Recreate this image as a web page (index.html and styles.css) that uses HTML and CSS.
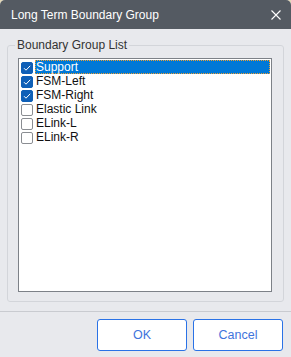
FILE: index.html
```html
<!DOCTYPE html>
<html>
<head>
<meta charset="utf-8">
<link rel="stylesheet" href="styles.css">
</head>
<body>
<div class="dialog">
  <div class="titlebar">
    <span class="title">Long Term Boundary Group</span>
    <svg class="close" width="10" height="10" viewBox="0 0 10 10"><path d="M0.5 0.5L9.5 9.5M9.5 0.5L0.5 9.5" stroke="#fff" stroke-width="1.1" fill="none"/></svg>
  </div>
  <div class="main">
    <fieldset class="group">
      <legend>Boundary Group List</legend>
      <div class="list">
        <div class="row"><span class="cb on"><svg width="12" height="12" viewBox="0 0 12 12"><path d="M3 6.2L5 8.2L9.2 3.8" stroke="#fff" stroke-width="1" fill="none"/></svg></span><span class="label sel">Support</span></div>
        <div class="row"><span class="cb on"><svg width="12" height="12" viewBox="0 0 12 12"><path d="M3 6.2L5 8.2L9.2 3.8" stroke="#fff" stroke-width="1" fill="none"/></svg></span><span class="label">FSM-Left</span></div>
        <div class="row"><span class="cb on"><svg width="12" height="12" viewBox="0 0 12 12"><path d="M3 6.2L5 8.2L9.2 3.8" stroke="#fff" stroke-width="1" fill="none"/></svg></span><span class="label">FSM-Right</span></div>
        <div class="row"><span class="cb"></span><span class="label">Elastic Link</span></div>
        <div class="row"><span class="cb"></span><span class="label">ELink-L</span></div>
        <div class="row"><span class="cb"></span><span class="label">ELink-R</span></div>
      </div>
    </fieldset>
  </div>
  <div class="footer">
    <button class="btn">OK</button>
    <button class="btn">Cancel</button>
  </div>
</div>
</body>
</html>
```
FILE: styles.css
```css
html, body {
  margin: 0;
  padding: 0;
  background: #e4d9b8;
}
.dialog {
  width: 291px;
  height: 357px;
  display: flex;
  flex-direction: column;
  background: #e8e9ed;
  font-family: "Liberation Sans", Arial, sans-serif;
  border-radius: 5px 5px 0 0;
  overflow: hidden;
}
.titlebar {
  height: 29px;
  flex: none;
  background: #545a62;
  color: #ffffff;
  display: flex;
  align-items: center;
  justify-content: space-between;
  padding: 0 10px 0 11px;
}
.title {
  font-size: 12px;
}
.close {
  display: block;
}
.main {
  flex: 1;
  display: flex;
  flex-direction: column;
  padding: 9px 7px 9px 7px;
  min-height: 0;
}
.group {
  flex: 1;
  margin: 0;
  border: 1px solid #d3d5da;
  border-radius: 3px;
  padding: 6px 11px 9px 10px;
  display: flex;
  flex-direction: column;
  min-height: 0;
}
.group legend {
  font-size: 12px;
  line-height: 14px;
  color: #333333;
  padding: 0 2px;
  margin-left: -3px;
}
.list {
  flex: 1;
  background: #ffffff;
  border: 1px solid #7d8188;
  padding: 1px 1px 0 2px;
}
.row {
  height: 14px;
  display: flex;
  align-items: center;
  font-size: 12px;
}
.cb {
  width: 12px;
  height: 12px;
  box-sizing: border-box;
  border: 1px solid #8a8d92;
  border-radius: 2px;
  background: #ffffff;
  flex: none;
  margin-top: 1px;
  margin-right: 2px;
  position: relative;
}
.cb.on {
  background: #0e5fb7;
  border-color: #0e5fb7;
}
.cb svg {
  position: absolute;
  left: -1px;
  top: -1px;
}
.label {
  height: 14px;
  line-height: 14px;
  padding-left: 1px;
  color: #111111;
  box-sizing: border-box;
}
.label.sel {
  flex: 1;
  background: #0078d7;
  color: #ffffff;
  outline: 1px dotted #f0a030;
  outline-offset: -1px;
}
.footer {
  flex: none;
  border-top: 1px solid #c9cbd0;
  padding: 7px 8px 6px 8px;
  display: flex;
  justify-content: flex-end;
  gap: 6px;
}
.btn {
  width: 90px;
  height: 32px;
  background: #ffffff;
  border: 1px solid #2a72e6;
  border-radius: 3px;
  color: #3f74dc;
  font-family: "Liberation Sans", Arial, sans-serif;
  font-size: 12.5px;
  padding: 0;
}
```
